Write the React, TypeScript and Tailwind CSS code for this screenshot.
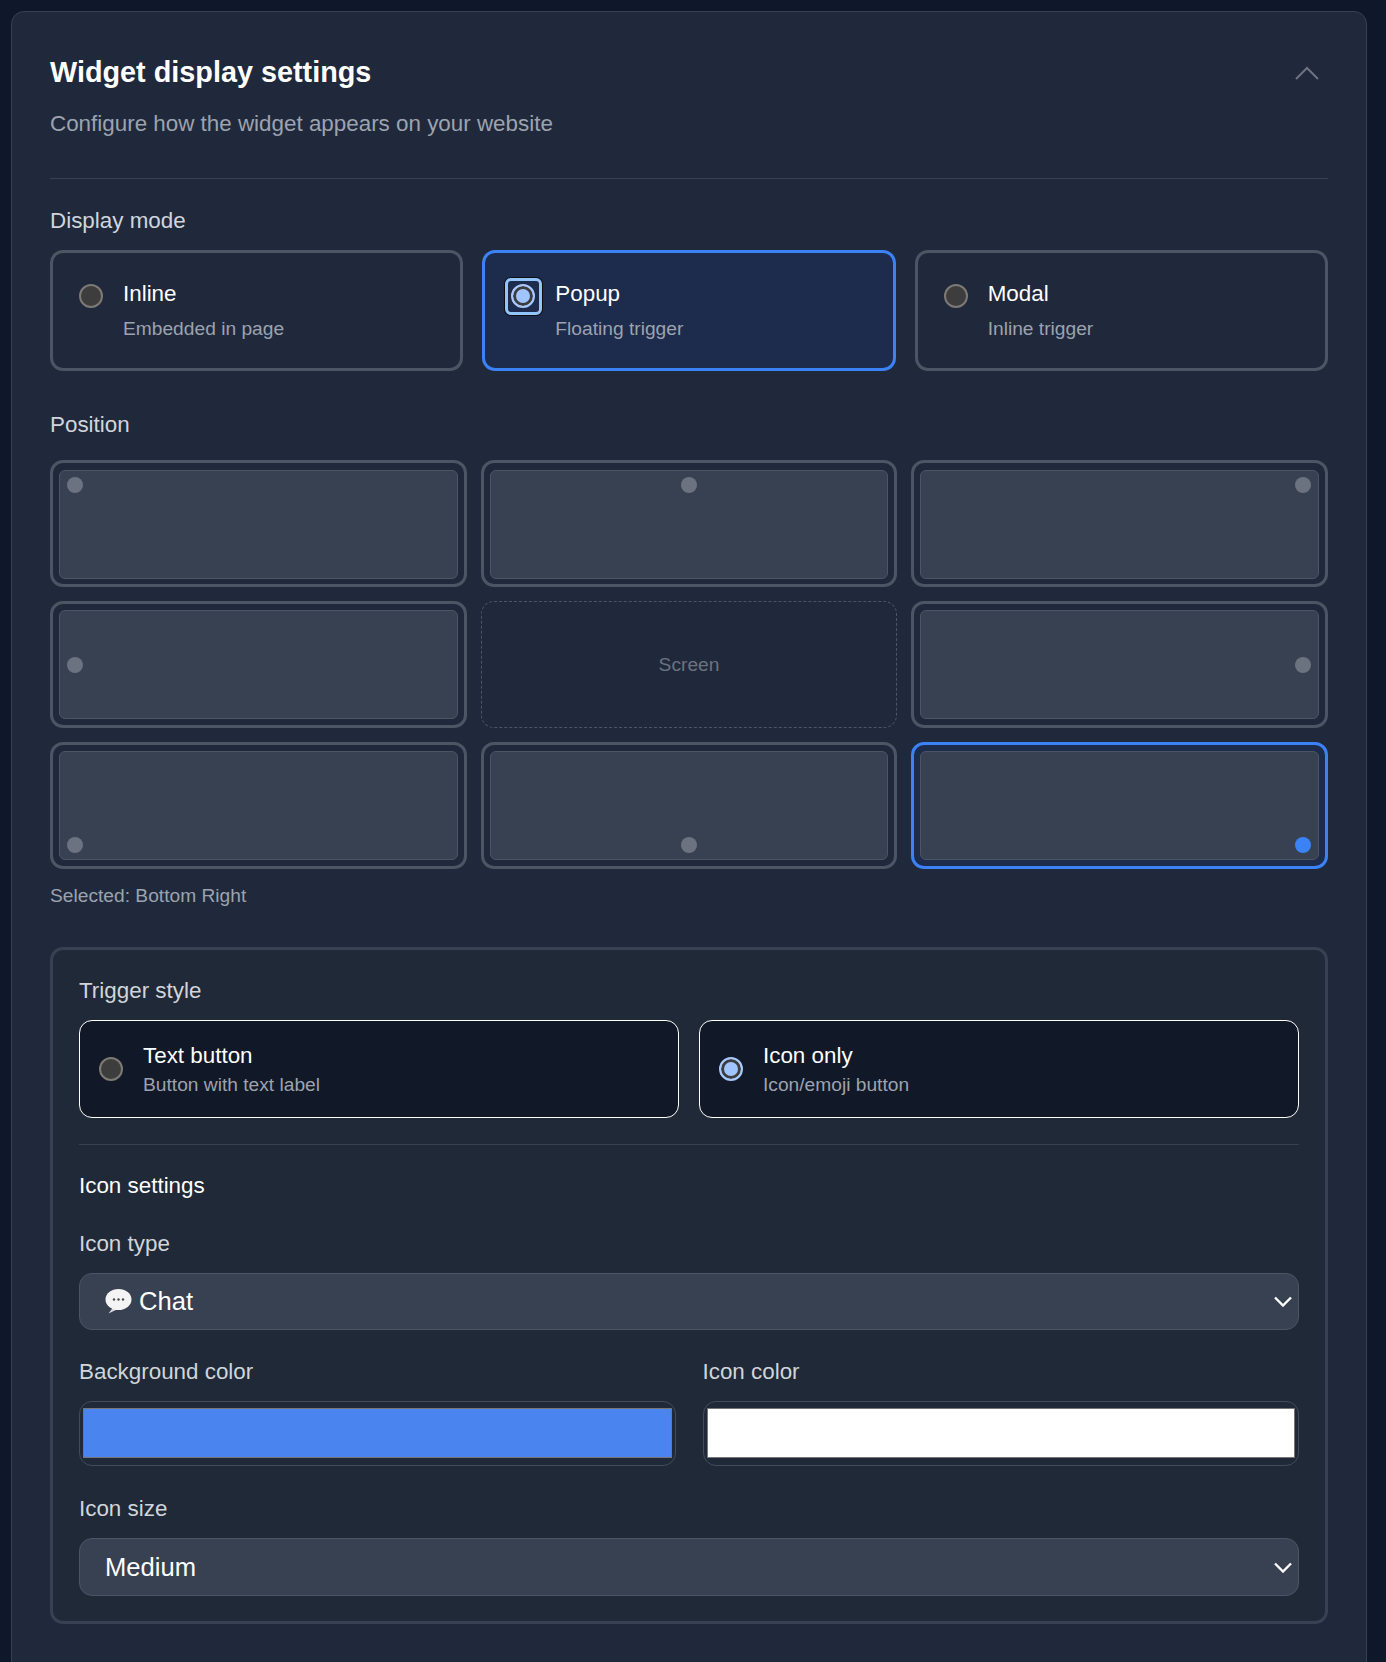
import React from "react";

function Radio({ checked, focus }: { checked?: boolean; focus?: boolean }) {
  return (
    <div className="relative w-[24px] h-[24px] shrink-0">
      {checked ? (
        <div className="w-[24px] h-[24px] rounded-full border-[2px] border-[#a8c7fa] bg-[#a0c4ff] shadow-[inset_0_0_0_3px_#3d3d3d]" />
      ) : (
        <div className="w-[24px] h-[24px] rounded-full border-[2px] border-[#7d7a75] bg-[#3d3d3d]" />
      )}
      {focus && (
        <div className="absolute top-[-6px] left-[-6px] right-[-7px] bottom-[-7px] rounded-[6px] border-[3px] border-[#93c5fd] shadow-[0_0_0_1px_#0f0f10]" />
      )}
    </div>
  );
}

function ModeCard({ title, sub, selected }: { title: string; sub: string; selected?: boolean }) {
  return (
    <div
      className={
        selected
          ? "h-[121px] rounded-[13px] border-[3px] border-[#3b82f6] bg-[#1d2b4d] pl-[26px] pt-[26px] flex gap-[20px]"
          : "h-[121px] rounded-[13px] border-[3px] border-[#4b5563] pl-[26px] pt-[26px] flex gap-[20px]"
      }
    >
      <div className="pt-[5px]">
        <Radio checked={selected} focus={selected} />
      </div>
      <div>
        <div className="text-[22.4px] leading-[30px] text-white">{title}</div>
        <div className="text-[19.2px] leading-[26px] mt-[7px] text-[#9ca3af]">{sub}</div>
      </div>
    </div>
  );
}

function PosCell({ h, v, selected }: { h: string; v: string; selected?: boolean }) {
  const frame = selected ? "border-[#3b82f6] bg-[#1d2b4d]" : "border-[#4b5563]";
  const pad = v === "items-start" ? "pt-[7px] pb-[5px]" : "pt-[6px] pb-[6px]";
  return (
    <div className={`h-[127px] rounded-[13px] border-[3px] px-[6px] flex ${frame} ${pad}`}>
      <div className={`flex-1 rounded-[6px] border border-[#4b5563] bg-[#374151] px-[7px] py-[6px] flex ${h} ${v}`}>
        <div className={selected ? "w-[16px] h-[16px] rounded-full bg-[#3b82f6]" : "w-[16px] h-[16px] rounded-full bg-[#6b7280]"} />
      </div>
    </div>
  );
}

function TriggerCard({ title, sub, checked }: { title: string; sub: string; checked?: boolean }) {
  return (
    <div className="h-[98px] rounded-[13px] border border-white bg-[#111827] pl-[19px] flex items-center gap-[20px]">
      <Radio checked={checked} />
      <div className="pt-[1px]">
        <div className="text-[22.4px] leading-[28px] text-white">{title}</div>
        <div className="text-[19.2px] leading-[24px] mt-[3px] text-[#9ca3af]">{sub}</div>
      </div>
    </div>
  );
}

function SelectChevron() {
  return (
    <svg width="18" height="11" viewBox="0 0 18 11" fill="none" className="shrink-0">
      <path d="M1 1.5 L9 9.5 L17 1.5" stroke="#ffffff" strokeWidth="2.4" />
    </svg>
  );
}

function ChatEmoji() {
  return (
    <svg width="27" height="27" viewBox="0 0 27 27" className="shrink-0">
      <path d="M8 19.5 L3.5 25.5 L13 21 Z" fill="#d8d8d8" />
      <ellipse cx="13.5" cy="11.5" rx="13" ry="10.5" fill="#f4f4f4" />
      <circle cx="9" cy="11.5" r="1.2" fill="#4a4a4a" />
      <circle cx="13.5" cy="11.5" r="1.2" fill="#4a4a4a" />
      <circle cx="18" cy="11.5" r="1.2" fill="#4a4a4a" />
    </svg>
  );
}

function Swatch({ color }: { color: string }) {
  return (
    <div className="h-[65px] rounded-[13px] border border-[#414b5c] pl-[3px] pr-[3px] pt-[6px] pb-[7px] flex">
      <div className={`flex-1 border border-[#767676] ${color}`} />
    </div>
  );
}

export default function App() {
  return (
    <div className="h-[1662px] overflow-hidden bg-[#0f172a] pl-[11px] pr-[19px] pt-[11px] font-['Liberation_Sans',Arial,sans-serif]">
      <div className="rounded-[13px] border border-[#374151] bg-[#20293b] px-[38px] pt-[45px] pb-[60px]">
        <div className="flex items-center justify-between">
          <div className="text-[28.8px] leading-[30px] font-bold text-white">Widget display settings</div>
          <svg width="24" height="14" viewBox="0 0 24 14" fill="none" className="mr-[9px] mt-[1px]">
            <path d="M1 13 L12 2 L23 13" stroke="#6b7280" strokeWidth="2" />
          </svg>
        </div>
        <div className="mt-[23px] text-[22.4px] leading-[28px] text-[#9ca3af]">Configure how the widget appears on your website</div>
        <div className="mt-[40px] h-px bg-[#374151]" />

        <div className="mt-[28px] text-[22.4px] leading-[28px] text-[#d1d5db]">Display mode</div>
        <div className="mt-[15px] grid grid-cols-3 gap-[19px]">
          <ModeCard title="Inline" sub="Embedded in page" />
          <ModeCard title="Popup" sub="Floating trigger" selected />
          <ModeCard title="Modal" sub="Inline trigger" />
        </div>

        <div className="mt-[40px] text-[22.4px] leading-[28px] text-[#d1d5db]">Position</div>
        <div className="mt-[21px] grid grid-cols-3 gap-[14px]">
          <PosCell h="justify-start" v="items-start" />
          <PosCell h="justify-center" v="items-start" />
          <PosCell h="justify-end" v="items-start" />
          <PosCell h="justify-start" v="items-center" />
          <div className="h-[127px] rounded-[13px] border border-dashed border-[#4b5563] flex items-center justify-center text-[19.2px] pt-[1px] text-[#6b7280]">
            Screen
          </div>
          <PosCell h="justify-end" v="items-center" />
          <PosCell h="justify-start" v="items-end" />
          <PosCell h="justify-center" v="items-end" />
          <PosCell h="justify-end" v="items-end" selected />
        </div>
        <div className="mt-[15px] text-[19.2px] leading-[24px] text-[#9ca3af]">Selected: Bottom Right</div>

        <div className="mt-[39px] rounded-[13px] border-[3px] border-[#374151] bg-[#1f2937] px-[26px] pt-[27px] pb-[25px]">
          <div className="text-[22.4px] leading-[28px] text-[#d1d5db]">Trigger style</div>
          <div className="mt-[15px] grid grid-cols-2 gap-[20px]">
            <TriggerCard title="Text button" sub="Button with text label" />
            <TriggerCard title="Icon only" sub="Icon/emoji button" checked />
          </div>
          <div className="mt-[26px] h-px bg-[#374151]" />
          <div className="mt-[27px] text-[22.4px] leading-[28px] text-white">Icon settings</div>
          <div className="mt-[30px] text-[22.4px] leading-[28px] text-[#d1d5db]">Icon type</div>
          <div className="mt-[15px] h-[57px] rounded-[13px] border border-[#4b5563] bg-[#374151] pl-[25px] pr-[6px] flex items-center justify-between">
            <div className="flex items-center gap-[7px] text-[25.6px] text-white">
              <ChatEmoji />
              <span>Chat</span>
            </div>
            <SelectChevron />
          </div>
          <div className="mt-[28px] grid grid-cols-2 gap-[27px]">
            <div>
              <div className="text-[22.4px] leading-[28px] text-[#d1d5db]">Background color</div>
              <div className="mt-[15px]">
                <Swatch color="bg-[#4a84ee]" />
              </div>
            </div>
            <div>
              <div className="text-[22.4px] leading-[28px] text-[#d1d5db]">Icon color</div>
              <div className="mt-[15px]">
                <Swatch color="bg-white" />
              </div>
            </div>
          </div>
          <div className="mt-[29px] text-[22.4px] leading-[28px] text-[#d1d5db]">Icon size</div>
          <div className="mt-[15px] h-[58px] rounded-[13px] border border-[#4b5563] bg-[#374151] pl-[25px] pr-[6px] flex items-center justify-between">
            <span className="text-[25.6px] text-white">Medium</span>
            <SelectChevron />
          </div>
        </div>
      </div>
    </div>
  );
}
